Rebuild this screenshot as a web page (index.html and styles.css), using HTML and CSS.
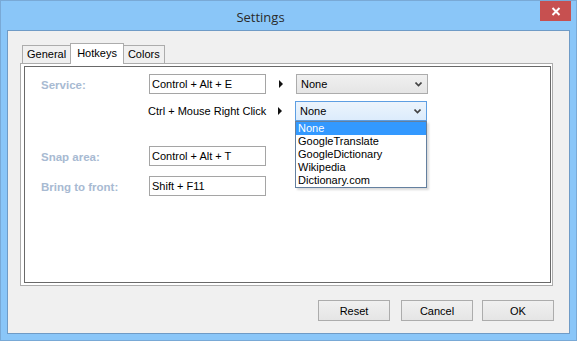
FILE: index.html
```html
<!DOCTYPE html>
<html lang="en">
<head>
    <meta charset="UTF-8">
    <title>Settings</title>
    <link rel="stylesheet" href="styles.css">
</head>
<body>
    <div class="window">
        <div class="titlebar">
            <span class="title">Settings</span>
            <div class="close-btn">
                <svg width="10" height="9" viewBox="0 0 10 9">
                    <path d="M1.5 1 L8.5 8 M8.5 1 L1.5 8" stroke="#fff" stroke-width="2" fill="none"/>
                </svg>
            </div>
        </div>

        <div class="client">
            <div class="tabs">
                <div class="tab">General</div>
                <div class="tab active">Hotkeys</div>
                <div class="tab">Colors</div>
            </div>

            <div class="tab-page">
                <div class="panel">
                    <div class="row">
                        <div class="label">Service:</div>
                        <div class="textbox">Control + Alt + E</div>
                        <div class="arrow"></div>
                        <div class="combo">
                            <span>None</span>
                            <svg class="chevron" width="7" height="5" viewBox="0 0 7 5"><path d="M0.5 0.5 L3.5 3.5 L6.5 0.5" stroke="#444" stroke-width="1.6" fill="none"/></svg>
                        </div>
                    </div>

                    <div class="row row-second">
                        <div class="label"></div>
                        <div class="plain">Ctrl + Mouse Right Click</div>
                        <div class="arrow"></div>
                        <div class="combo open">
                            <span>None</span>
                            <svg class="chevron" width="7" height="5" viewBox="0 0 7 5"><path d="M0.5 0.5 L3.5 3.5 L6.5 0.5" stroke="#444" stroke-width="1.6" fill="none"/></svg>
                            <ul class="dropdown">
                                <li class="selected">None</li>
                                <li>GoogleTranslate</li>
                                <li>GoogleDictionary</li>
                                <li>Wikipedia</li>
                                <li>Dictionary.com</li>
                            </ul>
                        </div>
                    </div>

                    <div class="row row-snap">
                        <div class="label">Snap area:</div>
                        <div class="textbox">Control + Alt + T</div>
                    </div>

                    <div class="row row-front">
                        <div class="label">Bring to front:</div>
                        <div class="textbox">Shift + F11</div>
                    </div>
                </div>
            </div>

            <div class="buttons">
                <button class="button">Reset</button>
                <button class="button btn-cancel">Cancel</button>
                <button class="button">OK</button>
            </div>
        </div>
    </div>
</body>
</html>
```

FILE: styles.css
```css
* {
    box-sizing: border-box;
}

body {
    margin: 0;
    font-family: 'Liberation Sans', Arial, sans-serif;
    font-size: 11px;
    color: #000;
}

.window {
    width: 577px;
    height: 341px;
    background-color: #8ac6f8;
    border: 1px solid #79a9d6;
    padding: 0 6px 6px 6px;
    display: flex;
    flex-direction: column;
}

.titlebar {
    height: 29px;
    position: relative;
    display: flex;
    align-items: center;
    justify-content: center;
    padding-right: 56px;
}

.title {
    font-family: 'Open Sans', sans-serif;
    font-size: 13px;
    color: #2b2b2b;
    margin-top: 2px;
}

.close-btn {
    position: absolute;
    right: -1px;
    top: 0;
    width: 31px;
    height: 20px;
    background-color: #c75050;
    display: flex;
    align-items: center;
    justify-content: center;
}

.client {
    flex: 1;
    background-color: #f0f0f0;
    border: 1px solid #6f9bc6;
    padding: 12px 15px 0 12px;
}

.tabs {
    display: flex;
    align-items: flex-end;
    height: 20px;
    padding-left: 2px;
}

.tab {
    height: 18px;
    padding: 0 4px;
    border: 1px solid #acacac;
    border-bottom: none;
    background-color: #f0f0f0;
    line-height: 17px;
}

.tab.active {
    height: 21px;
    margin-bottom: -1px;
    background-color: #fff;
    padding: 0 6px;
    position: relative;
    line-height: 18px;
    margin-left: -1px;
    margin-right: -1px;
}

.tab-page {
    width: 533px;
    height: 223px;
    background-color: #fff;
    border: 1px solid #acacac;
    padding: 2px 1px 2px 3px;
}

.panel {
    height: 100%;
    border: 1px solid #696969;
    padding: 7px 0 0 16px;
}

.row {
    display: flex;
    align-items: center;
    height: 20px;
}

.row-second {
    margin-top: 7px;
}

.row-snap {
    margin-top: 25px;
}

.row-front {
    margin-top: 10px;
}

.label {
    width: 108px;
    color: #a8bad2;
    font-weight: bold;
    font-size: 11.5px;
    padding-top: 1px;
}

.textbox {
    width: 117px;
    height: 20px;
    border: 1px solid #a5a5a5;
    background-color: #fff;
    padding: 0 2px;
    line-height: 18px;
}

.plain {
    width: 117px;
    margin-left: -1px;
    white-space: nowrap;
}

.arrow {
    width: 0;
    height: 0;
    margin-left: 13px;
    margin-right: 13px;
    border-left: 4px solid #111;
    border-top: 4px solid transparent;
    border-bottom: 4px solid transparent;
}

.combo {
    position: relative;
    width: 132px;
    height: 20px;
    border: 1px solid #acacac;
    background: linear-gradient(#f0f0f0, #e5e5e5);
    display: flex;
    align-items: center;
    justify-content: space-between;
    padding: 0 5px 0 4px;
}

.combo.open {
    border-color: #5d9ee2;
    background: linear-gradient(#ecf4fc, #dcecfc);
}

.chevron {
    margin-top: 1px;
}

.dropdown {
    position: absolute;
    left: -1px;
    top: 19px;
    width: 132px;
    margin: 0;
    padding: 0;
    list-style: none;
    background-color: #fff;
    border: 1px solid #64809f;
    box-shadow: 2px 2px 2px rgba(0, 0, 0, 0.15);
}

.dropdown li {
    height: 13px;
    line-height: 13px;
    padding-left: 2px;
}

.dropdown li.selected {
    background-color: #3399ff;
    color: #fff;
}

.buttons {
    display: flex;
    justify-content: flex-end;
    margin-top: 14px;
    padding-right: 0;
}

.button {
    width: 72px;
    height: 21px;
    font-family: inherit;
    font-size: 11px;
    color: #000;
    background: linear-gradient(#f0f0f0, #e5e5e5);
    border: 1px solid #acacac;
    margin-left: 9px;
    padding: 0;
}

.btn-cancel {
    margin-left: 11px;
}
```
